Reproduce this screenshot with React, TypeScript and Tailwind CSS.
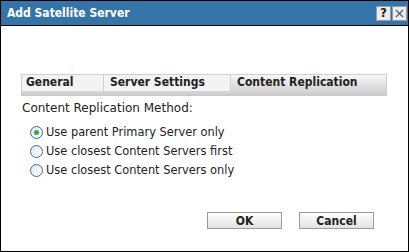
import { X } from 'lucide-react'

const options = [
  'Use parent Primary Server only',
  'Use closest Content Servers first',
  'Use closest Content Servers only',
]

function Radio({ checked }: { checked: boolean }) {
  return (
    <span className="w-[13px] h-[13px] rounded-full border border-[#3d6a9e] bg-gradient-to-br from-[#dfe6ee] to-white flex items-center justify-center flex-shrink-0">
      {checked && <span className="w-[5px] h-[5px] rounded-full bg-[#2fae3b]" />}
    </span>
  )
}

const condensed = { fontFamily: '"DejaVu Sans Condensed", "DejaVu Sans", sans-serif' }

export default function App() {
  return (
    <div
      className="w-[409px] h-[252px] border border-black bg-white flex flex-col"
      style={{ fontFamily: '"DejaVu Sans", Verdana, sans-serif' }}
    >
      <div className="h-[25px] bg-[#3574a8] border-b border-black flex items-center justify-between pl-[6px] pr-[1px]">
        <span className="text-white font-bold text-[12px]" style={condensed}>
          Add Satellite Server
        </span>
        <div className="flex gap-[1px]">
          <span className="w-[15px] h-[15px] bg-[#ececec] border border-[#9a9a9a] flex items-center justify-center text-[12px] font-bold text-[#222] leading-none">
            ?
          </span>
          <span className="w-[15px] h-[15px] bg-[#ececec] border border-[#9a9a9a] flex items-center justify-center text-[#555]">
            <X className="w-[13px] h-[13px]" strokeWidth={2} />
          </span>
        </div>
      </div>

      <div className="flex-1 flex flex-col px-[20px] pt-[48px] text-[12px] text-[#222]">
        <div className="flex border-t border-l border-r border-[#cfcfcf] mr-[1px] text-[12px] font-bold leading-[15px]" style={condensed}>
          <div className="w-[82px] h-[16px] pl-[4px] border-r border-[#cfcfcf] bg-[#f3f3f3]">General</div>
          <div className="w-[127px] h-[16px] pl-[6px] border-r border-[#cfcfcf] bg-[#f3f3f3]">Server Settings</div>
          <div className="flex-1 h-[16px] pl-[6px] bg-gradient-to-b from-[#f7f7f7] to-[#d4d4d4]">Content Replication</div>
        </div>
        <div className="h-[5px] border-l border-r border-[#c4c4c4] mr-[1px] bg-gradient-to-b from-[#d8d8d8] to-[#c8c8c8]" />

        <div className="pt-[5px] pl-[1px] leading-[15px]">Content Replication Method:</div>
        <div className="flex flex-col gap-[6px] pl-[9px] pt-[10px] text-[11.4px]">
          {options.map((o, i) => (
            <label key={o} className="flex items-center gap-[3px] h-[13px]">
              <Radio checked={i === 0} />
              <span>{o}</span>
            </label>
          ))}
        </div>

        <div className="flex justify-end gap-[17px] pr-[14px] pt-[35px]">
          {['OK', 'Cancel'].map((b) => (
            <button
              key={b}
              className="w-[75px] h-[17px] border border-[#9b9b9b] bg-gradient-to-b from-white to-[#e2e2e2] text-[12px] font-bold text-[#222] leading-none"
              style={condensed}
            >
              {b}
            </button>
          ))}
        </div>
      </div>
    </div>
  )
}
